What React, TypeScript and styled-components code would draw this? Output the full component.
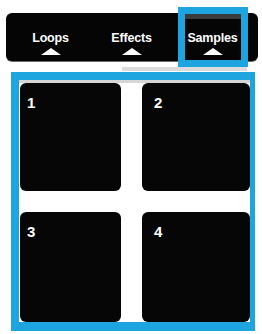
import styled, { createGlobalStyle } from 'styled-components';

const GlobalStyle = createGlobalStyle`
  body {
    margin: 0;
    background: #ffffff;
    font-family: "Liberation Sans", Arial, sans-serif;
  }
`;

const BLUE = '#1ea4de';

type PadProps = { $inset: number };

const tabs = ['Loops', 'Effects', 'Samples'];
const pads = [
  { label: '1', inset: 7 },
  { label: '2', inset: 12 },
  { label: '3', inset: 7 },
  { label: '4', inset: 12 },
];

const App = () => {
  return (
    <Page>
      <GlobalStyle />
      <TabBar>
        {tabs.map((name) => (
          <Tab key={name}>
            {name === 'Samples' && <Highlight />}
            <TabLabel>{name}</TabLabel>
            <Arrow />
          </Tab>
        ))}
      </TabBar>
      <Shade />
      <PadFrame>
        <PadGrid>
          {pads.map((p) => (
            <Pad key={p.label} $inset={p.inset}>
              {p.label}
            </Pad>
          ))}
        </PadGrid>
      </PadFrame>
    </Page>
  );
};

export default App;

const Page = styled.div`
  width: 262px;
  height: 334px;
  padding-top: 13px;
  box-sizing: border-box;
  overflow: hidden;
`;

const TabBar = styled.div`
  margin-left: 6px;
  width: 252px;
  height: 48px;
  box-sizing: border-box;
  padding: 0 5px 0 4px;
  display: flex;
  background: #050505;
  border-radius: 6px;
  box-shadow: 0 1px 0 #6a6a6a;
`;

const Tab = styled.div`
  position: relative;
  flex: 1;
  display: flex;
  flex-direction: column;
  align-items: center;
  padding-top: 18px;
`;

const TabLabel = styled.span`
  position: relative;
  color: #ffffff;
  font-weight: bold;
  font-size: 12.5px;
  line-height: 14px;
  letter-spacing: -0.2px;
`;

const Arrow = styled.div`
  position: relative;
  margin-top: 3px;
  width: 0;
  height: 0;
  border-left: 10px solid transparent;
  border-right: 10px solid transparent;
  border-bottom: 7px solid #ffffff;
`;

const Highlight = styled.div`
  position: absolute;
  top: -6px;
  left: 50%;
  transform: translateX(-50%);
  width: 70px;
  height: 60px;
  box-sizing: border-box;
  border: 7px solid ${BLUE};
  box-shadow: inset 0 5px 0 #3b3b3b;
`;

const Shade = styled.div`
  margin: 6px 0 0 122px;
  width: 125px;
  height: 4px;
  background: #dcdcdc;
`;

const PadFrame = styled.div`
  margin: 1px 0 0 11px;
  width: 244px;
  box-sizing: border-box;
  border-style: solid;
  border-color: ${BLUE};
  border-width: 8px 5px 9px 8px;
`;

const PadGrid = styled.div`
  display: grid;
  grid-template-columns: 101px 108px;
  grid-template-rows: 108px 110px;
  column-gap: 21px;
  row-gap: 21px;
  padding-left: 1px;
  border-top: 3px solid #d6d6d6;
`;

const Pad = styled.div<PadProps>`
  background: #060606;
  border-radius: 6px;
  color: #ffffff;
  font-weight: bold;
  font-size: 15px;
  line-height: 15px;
  padding: 12px 0 0 ${(p) => p.$inset}px;
`;
